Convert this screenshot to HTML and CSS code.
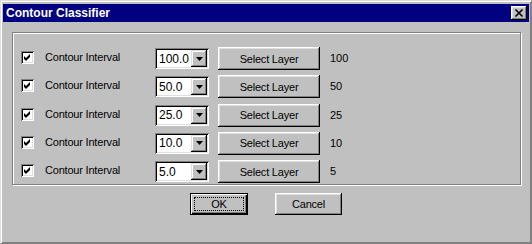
FILE: index.html
```html
<!DOCTYPE html>
<html lang="en">
<head>
    <meta charset="UTF-8">
    <title>Contour Classifier</title>
    <link rel="stylesheet" href="styles.css">
</head>
<body>

    <div class="window">
        <!-- Barra de titulo -->
        <div class="titlebar">
            <span class="title">Contour Classifier</span>
            <button class="close">
                <svg width="16" height="14" viewBox="0 0 16 14">
                    <path d="M4.5 3.5 L11.5 10.5 M11.5 3.5 L4.5 10.5" stroke="#000" stroke-width="1.6" fill="none"/>
                </svg>
            </button>
        </div>

        <div class="content">
            <div class="group">
                <div class="row">
                    <span class="check"><svg width="13" height="13" viewBox="0 0 13 13"><path d="M3 5 L5 7 L9 3 L9 6 L5 10 L3 8 Z" fill="#000"/></svg></span>
                    <span class="label">Contour Interval</span>
                    <div class="combo"><span class="value">100.0</span><span class="drop"><svg width="7" height="4" viewBox="0 0 7 4"><path d="M0 0 H7 L3.5 4 Z" fill="#000"/></svg></span></div>
                    <button class="btn layer">Select Layer</button>
                    <span class="num">100</span>
                </div>
                <div class="row">
                    <span class="check"><svg width="13" height="13" viewBox="0 0 13 13"><path d="M3 5 L5 7 L9 3 L9 6 L5 10 L3 8 Z" fill="#000"/></svg></span>
                    <span class="label">Contour Interval</span>
                    <div class="combo"><span class="value">50.0</span><span class="drop"><svg width="7" height="4" viewBox="0 0 7 4"><path d="M0 0 H7 L3.5 4 Z" fill="#000"/></svg></span></div>
                    <button class="btn layer">Select Layer</button>
                    <span class="num">50</span>
                </div>
                <div class="row">
                    <span class="check"><svg width="13" height="13" viewBox="0 0 13 13"><path d="M3 5 L5 7 L9 3 L9 6 L5 10 L3 8 Z" fill="#000"/></svg></span>
                    <span class="label">Contour Interval</span>
                    <div class="combo"><span class="value">25.0</span><span class="drop"><svg width="7" height="4" viewBox="0 0 7 4"><path d="M0 0 H7 L3.5 4 Z" fill="#000"/></svg></span></div>
                    <button class="btn layer">Select Layer</button>
                    <span class="num">25</span>
                </div>
                <div class="row">
                    <span class="check"><svg width="13" height="13" viewBox="0 0 13 13"><path d="M3 5 L5 7 L9 3 L9 6 L5 10 L3 8 Z" fill="#000"/></svg></span>
                    <span class="label">Contour Interval</span>
                    <div class="combo"><span class="value">10.0</span><span class="drop"><svg width="7" height="4" viewBox="0 0 7 4"><path d="M0 0 H7 L3.5 4 Z" fill="#000"/></svg></span></div>
                    <button class="btn layer">Select Layer</button>
                    <span class="num">10</span>
                </div>
                <div class="row">
                    <span class="check"><svg width="13" height="13" viewBox="0 0 13 13"><path d="M3 5 L5 7 L9 3 L9 6 L5 10 L3 8 Z" fill="#000"/></svg></span>
                    <span class="label">Contour Interval</span>
                    <div class="combo"><span class="value">5.0</span><span class="drop"><svg width="7" height="4" viewBox="0 0 7 4"><path d="M0 0 H7 L3.5 4 Z" fill="#000"/></svg></span></div>
                    <button class="btn layer">Select Layer</button>
                    <span class="num">5</span>
                </div>
            </div>

            <div class="actions">
                <button class="btn default"><span class="focus">OK</span></button>
                <button class="btn cancel">Cancel</button>
            </div>
        </div>
    </div>

</body>
</html>
```

FILE: styles.css
```css
* {
    box-sizing: border-box;
}
body {
    margin: 0;
    font-family: "Liberation Sans", Arial, sans-serif;
    font-size: 11px;
    background: #c0c0c0;
}
.window {
    width: 532px;
    height: 244px;
    background: #c0c0c0;
    border-top: 1px solid #dfdfdf;
    border-left: 1px solid #dfdfdf;
    border-right: 1px solid #808080;
    border-bottom: 1px solid #808080;
    box-shadow: inset 1px 1px 0 #fff, inset -1px -1px 0 #808080;
    padding: 3px 2px 2px 2px;
}
.titlebar {
    height: 18px;
    background: #000080;
    display: flex;
    align-items: center;
    justify-content: space-between;
    padding: 0 2px 0 3px;
}
.title {
    color: #fff;
    font-weight: bold;
    font-size: 12px;
}
.close {
    width: 16px;
    height: 14px;
    padding: 0;
    border: none;
    background: #c0c0c0;
    box-shadow: inset -1px -1px 0 #000, inset 1px 1px 0 #fff, inset -2px -2px 0 #808080, inset 2px 2px 0 #dfdfdf;
    display: flex;
}
.content {
    padding: 10px 0 0 9px;
}
.group {
    width: 509px;
    border: 1px solid #808080;
    box-shadow: 1px 1px 0 #fff, inset 1px 1px 0 #fff;
    padding: 14px 0 1px 8px;
    display: flex;
    flex-direction: column;
    gap: 5.25px;
}
.row {
    display: flex;
    align-items: flex-start;
    height: 23px;
}
.check {
    width: 13px;
    height: 13px;
    margin-top: 4px;
    background: #fff;
    box-shadow: inset 1px 1px 0 #808080, inset -1px -1px 0 #fff, inset 2px 2px 0 #000, inset -2px -2px 0 #dfdfdf;
    display: flex;
}
.label {
    width: 110px;
    margin-left: 11px;
    margin-top: 4px;
    line-height: 13px;
    letter-spacing: -0.2px;
}
.combo {
    width: 54px;
    height: 21px;
    margin-top: 1px;
    background: #fff;
    box-shadow: inset 1px 1px 0 #808080, inset -1px -1px 0 #fff, inset 2px 2px 0 #000, inset -2px -2px 0 #dfdfdf;
    padding: 2px;
    display: flex;
    align-items: center;
}
.value {
    flex: 1;
    padding-left: 2px;
    font-size: 12px;
}
.drop {
    width: 16px;
    height: 17px;
    background: #c0c0c0;
    box-shadow: inset -1px -1px 0 #000, inset 1px 1px 0 #dfdfdf, inset -2px -2px 0 #808080, inset 2px 2px 0 #fff;
    display: flex;
    align-items: center;
    justify-content: center;
}
.btn {
    font-family: "Liberation Sans", Arial, sans-serif;
    font-size: 11px;
    color: #000;
    background: #c0c0c0;
    border: none;
    padding: 0;
    letter-spacing: -0.2px;
    box-shadow: inset -1px -1px 0 #000, inset 1px 1px 0 #fff, inset -2px -2px 0 #808080, inset 2px 2px 0 #dfdfdf;
}
.layer {
    width: 102px;
    height: 23px;
    margin-left: 9px;
}
.num {
    margin-left: 10px;
    line-height: 23px;
}
.actions {
    display: flex;
    justify-content: center;
    gap: 27px;
    margin-top: 8px;
    padding-right: 9px;
}
.actions .btn {
    height: 22px;
}
.default {
    width: 58px;
    padding: 4px;
    box-shadow: inset 0 0 0 1px #000, inset 2px 2px 0 #fff, inset -2px -2px 0 #000, inset -3px -3px 0 #808080;
}
.focus {
    display: block;
    height: 100%;
    border: 1px dotted #000;
    line-height: 12px;
}
.cancel {
    width: 67px;
}
```
